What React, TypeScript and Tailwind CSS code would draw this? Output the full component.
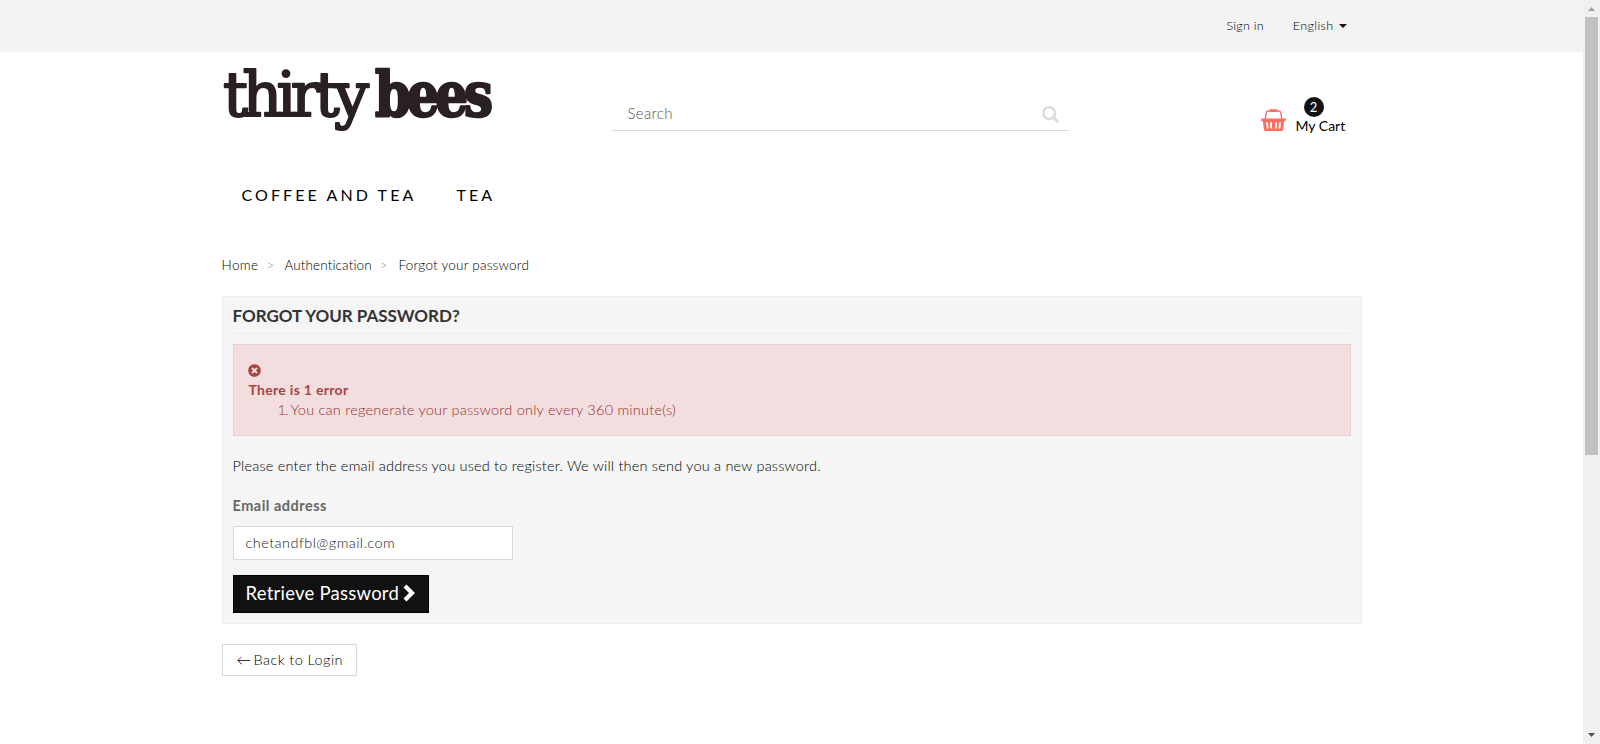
import { FaTimesCircle } from "react-icons/fa";

function Logo() {
  return (
    <svg width="280" height="90" viewBox="0 0 280 90" className="block" role="img" aria-label="thirty bees">
      <g fill="#2a2024" stroke="#2a2024" strokeLinejoin="round" style={{ fontFamily: '"DejaVu Serif", serif' }}>
        <text x="1" y="64" fontSize="62" strokeWidth="2" textLength="146" lengthAdjust="spacing">thirty</text>
        <text
          transform="translate(153 64) scale(0.83 1)"
          fontSize="62"
          fontWeight="700"
          strokeWidth="2.600"
          textLength="142"
          lengthAdjust="spacing"
        >
          bees
        </text>
      </g>
    </svg>
  );
}

function BasketIcon() {
  return (
    <svg width="25" height="22" viewBox="0 0 25 22" className="block">
      <path d="M4.200 10L5.200 3.800Q5.600 2 7.300 2H17.700Q19.400 2 19.800 3.800L20.800 10" fill="none" stroke="#ff6f61" strokeWidth="1.4" />
      <rect x="8.500" y="0.200" width="8" height="2.800" rx="1.200" fill="#ff6f61" />
      <path
        fillRule="evenodd"
        fill="#ff6f61"
        d="M1 9.500H24Q25 9.500 25 10.500T24 12.200H23.200L22 20.800Q21.800 22 20.500 22H4.500Q3.200 22 3 20.800L1.800 12.200H1Q0 12 0 10.800T1 9.500ZM5 13.200L5.700 19.500H7.500L7 13.200ZM9 13.200L9.300 19.500H11.100L10.900 13.200ZM14.100 13.200L13.900 19.500H15.700L16 13.200ZM18 13.200L17.500 19.500H19.300L20 13.200Z"
      />
    </svg>
  );
}

function TopBar() {
  return (
    <div className="h-[52px] bg-[#f3f3f3]">
      <div className="mx-auto flex h-[52px] w-[1140px] items-center justify-end pr-[15px] text-[12.5px] font-light text-black">
        <a className="mr-[29px] tracking-[0.25px]">Sign in</a>
        <a className="flex items-center">
          <span className="tracking-[0.38px]">English</span>
          <span className="ml-[5px] border-x-4 border-t-4 border-x-transparent border-t-[#111]" />
        </a>
      </div>
    </div>
  );
}

function Header() {
  return (
    <div className="mx-auto flex h-[103px] w-[1140px]">
      <Logo />
      <div className="ml-[110px] mt-[45px] flex h-[34px] w-[457px] items-center justify-between border-b border-[#d9d9d9] pl-[15px] pr-[10px]">
        <span className="ml-px text-[15px] font-light tracking-[0.35px] text-[#555]">Search</span>
        <svg width="17" height="17" viewBox="0 0 17 17" className="mt-px" fill="none" stroke="#dcdcdc">
          <circle cx="7.200" cy="7.200" r="5.900" strokeWidth="2.600" />
          <path d="M11.500 11.500L15.500 15.500" strokeWidth="3" strokeLinecap="round" />
        </svg>
      </div>
      <a className="ml-[192px] mt-[45px] flex text-black">
        <span className="mt-3">
          <BasketIcon />
        </span>
        <span className="ml-[10px] flex flex-col">
          <span className="ml-2 flex size-5 items-center justify-center rounded-full bg-[#111] text-[13px] leading-5 text-white">2</span>
          <span className="text-[14px] leading-[18px]">My Cart</span>
        </span>
      </a>
    </div>
  );
}

function Breadcrumb() {
  return (
    <div className="flex h-[61px] items-center text-[13.5px] font-light text-black">
      <span className="tracking-[0.4px]">Home</span>
      <span className="ml-[8px] mr-[10px] text-[#999]">&gt;</span>
      <span className="tracking-[0.13px]">Authentication</span>
      <span className="ml-[8px] mr-[11px] text-[#999]">&gt;</span>
      <span className="tracking-[0.22px]">Forgot your password</span>
    </div>
  );
}

function ErrorAlert() {
  return (
    <div className="mt-[10px] border border-[#ebccd1] bg-[#f2dede] p-[15px] text-[14.5px] leading-5 text-[#a94442]">
      <div className="-ml-px flex h-5 items-center">
        <FaTimesCircle className="size-[13px]" />
      </div>
      <p className="text-[14px] font-bold leading-5 tracking-[0.3px]">There is 1 error</p>
      <div className="flex pl-[29px] font-light text-[#982f2d]">
        <span className="w-[13px] tracking-[-0.8px]">1.</span>
        <span className="tracking-[0.23px]">You can regenerate your password only every 360 minute(s)</span>
      </div>
    </div>
  );
}

function PasswordPanel() {
  return (
    <div className="border border-[#ececec] bg-[#f5f5f5] px-[10px] pb-[10px] pt-[9px]">
      <h1 className="border-b border-[#ececec] pb-2 text-[17px] font-bold leading-[19px] tracking-[-0.02px] text-[#333]">
        FORGOT YOUR PASSWORD?
      </h1>
      <ErrorAlert />
      <p className="mt-5 text-[14.5px] font-light leading-5 tracking-[0.205px] text-black">
        Please enter the email address you used to register. We will then send you a new password.
      </p>
      <p className="mt-5 text-[14.5px] font-bold leading-5 tracking-[0.5px] text-[#666]">Email address</p>
      <div className="mt-[10px] flex h-[34px] w-[280px] items-center border border-[#d9d9d9] bg-white px-3 text-[14.5px] font-light tracking-[0.44px] text-[#222]">
        chetandfbl@gmail.com
      </div>
      <button className="mt-[15px] flex h-[38px] w-[196px] items-center border border-black bg-[#111] pb-[2px] pl-3 text-[18.5px] leading-6 text-white">
        <span className="tracking-[0.24px]">Retrieve Password</span>
        <svg width="12" height="18" viewBox="0 0 12 18" className="ml-1" fill="none" stroke="#fff" strokeWidth="4.2">
          <path d="M2 2L9 9L2 16" />
        </svg>
      </button>
    </div>
  );
}

function Scrollbar() {
  return (
    <div className="flex w-[17px] flex-col items-center bg-[#f0f0f0]">
      <svg width="7" height="4" viewBox="0 0 7 4" className="mb-[6px] mt-[7px] block shrink-0">
        <path d="M0 4L3.500 0L7 4Z" fill="#a0a0a0" />
      </svg>
      <div className="h-[438px] w-[13px] bg-[#c1c1c1]" />
      <svg width="7" height="4" viewBox="0 0 7 4" className="mb-[7px] mt-auto block shrink-0">
        <path d="M0 0L3.500 4L7 0Z" fill="#505050" />
      </svg>
    </div>
  );
}

export default function App() {
  return (
    <div className="flex h-[744px] w-[1600px] overflow-hidden bg-white font-['Lato','Liberation_Sans',sans-serif]">
      <div className="flex-1">
        <TopBar />
        <Header />
        <nav className="mx-auto flex h-20 w-[1140px] items-center gap-[40px] pl-5 text-[16px] tracking-[3.08px] text-black">
          <a>COFFEE AND TEA</a>
          <a>TEA</a>
        </nav>
        <main className="mx-auto w-[1140px]">
          <Breadcrumb />
          <PasswordPanel />
          <a className="mt-5 flex h-8 w-[135px] items-center border border-[#d9d9d9] pl-[14px] text-[14.5px] font-light text-black">
            <span className="w-[17px]">←</span>
            <span className="tracking-[0.42px]">Back to Login</span>
          </a>
        </main>
      </div>
      <Scrollbar />
    </div>
  );
}
